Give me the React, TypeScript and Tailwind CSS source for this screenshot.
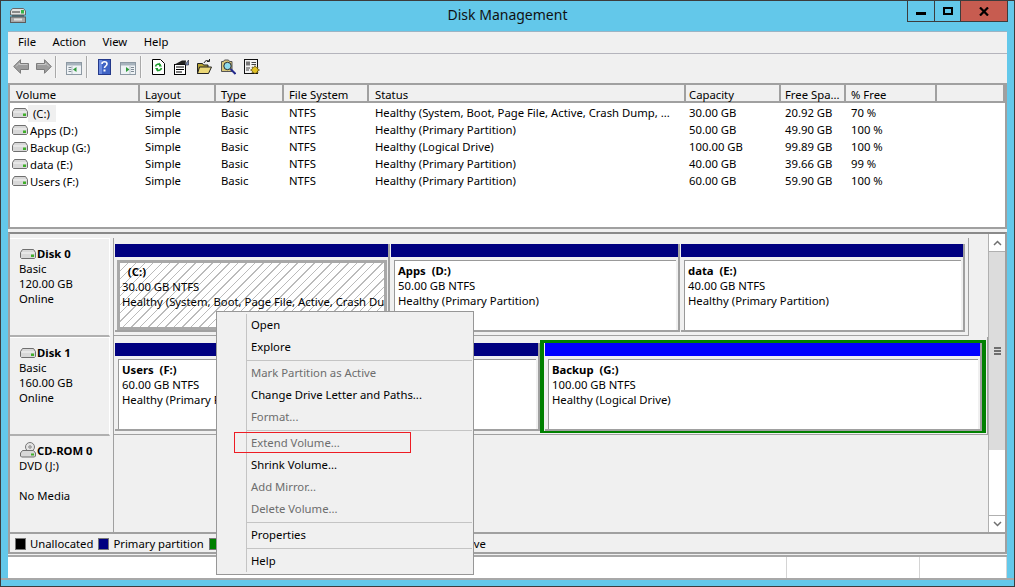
import React from "react";

const FONT = "font-['Noto_Sans','Open_Sans',sans-serif]";

const volumes = [
  { name: " (C:)", status: "Healthy (System, Boot, Page File, Active, Crash Dump, ...", cap: "30.00 GB", free: "20.92 GB", pct: "70 %" },
  { name: "Apps (D:)", status: "Healthy (Primary Partition)", cap: "50.00 GB", free: "49.90 GB", pct: "100 %" },
  { name: "Backup (G:)", status: "Healthy (Logical Drive)", cap: "100.00 GB", free: "99.89 GB", pct: "100 %" },
  { name: "data (E:)", status: "Healthy (Primary Partition)", cap: "40.00 GB", free: "39.66 GB", pct: "99 %" },
  { name: "Users (F:)", status: "Healthy (Primary Partition)", cap: "60.00 GB", free: "59.90 GB", pct: "100 %" },
];

const columns = [
  { label: "Volume", w: "w-[130px] pl-[6px]" },
  { label: "Layout", w: "w-[76px] pl-[5px]" },
  { label: "Type", w: "w-[68px] pl-[5px]" },
  { label: "File System", w: "w-[85px] pl-[5px]" },
  { label: "Status", w: "w-[317px] pl-[6px]" },
  { label: "Capacity", w: "w-[95px] pl-[3px]" },
  { label: "Free Spa...", w: "w-[65px] pl-[4px]" },
  { label: "% Free", w: "w-[91px] pl-[5px]" },
  { label: "", w: "w-[68px]" },
];

// small drive glyph used in list and disk labels
const Drive = () => (
  <svg width="16" height="10" viewBox="0 0 16 10" className="shrink-0">
    <path d="M2.500 .5h11l2 3v5l-1 1h-13l-1-1v-5z" fill="#d8d8d8" stroke="#6f6f6f" />
    <path d="M1.500 4h13" stroke="#f6f6f6" />
    <rect x="11" y="5.500" width="3" height="2.500" fill="#3fae2a" />
  </svg>
);

const CdDrive = () => (
  <svg width="16" height="16" viewBox="0 0 16 16" className="shrink-0">
    <circle cx="10" cy="5" r="4.500" fill="#e4e4e4" stroke="#777" />
    <circle cx="10" cy="5" r="1.200" fill="#fff" stroke="#777" />
    <path d="M2.500 8.500h11l2 2.500v3l-1 1H1.500l-1-1v-3z" fill="#d8d8d8" stroke="#6f6f6f" />
    <rect x="11" y="11.500" width="3" height="2" fill="#3fae2a" />
  </svg>
);

const TitleIcon = () => (
  <svg width="16" height="15" viewBox="0 0 16 15">
    <path d="M2.500 .5h11l2 2.500v4H.5V3z" fill="#e2e2e2" stroke="#666" />
    <rect x="11" y="2" width="3" height="3.500" fill="#37b44a" />
    <rect x="2" y="3" width="8" height="2" fill="#8a8a8a" />
    <rect x="2" y="7.500" width="12" height="1" fill="#333" />
    <rect x=".5" y="9" width="15" height="5.500" fill="#a8a8a8" stroke="#5c5c5c" />
    <rect x="4" y="10.500" width="8" height="2" fill="#e2e2e2" />
  </svg>
);

const Arrow = ({ flip }: { flip?: boolean }) => (
  <svg width="16" height="15" viewBox="0 0 16 15" className={`shrink-0 ${flip ? "-scale-x-100" : ""}`}>
    <path d="M.7 7.500 7.500.7v3.800h8v6h-8v3.800z" fill="#9c9c9c" stroke="#7c7c7c" />
    <path d="M3 7.500l3.500-3.500v1.500h8" fill="none" stroke="#c8c8c8" />
  </svg>
);

const PaneIcon = ({ right }: { right?: boolean }) => (
  <svg width="16" height="13" viewBox="0 0 16 13" className="mt-[3px] shrink-0">
    <rect x=".5" y=".5" width="15" height="12" fill="#eef2f5" stroke="#8d99a3" />
    <rect x="1" y="1" width="14" height="2.500" fill="#a7b3bd" />
    <path d="M2.500 5.500h3M2.500 7.500h3M2.500 9.500h3" stroke="#7d8a94" transform={right ? "translate(8.500 0)" : ""} />
    <path d={right ? "M6 5l3.500 2.500L6 10z" : "M10.500 5 7 7.500l3.500 2.500z"} fill="#2e9b3a" />
    <path d={right ? "M10 4v8" : "M6 4v8"} stroke="#b8c2ca" />
  </svg>
);

const HelpIcon = () => (
  <svg width="13" height="16" viewBox="0 0 13 16" className="shrink-0">
    <rect x=".5" y=".5" width="12" height="15" fill="#3f63c4" stroke="#24398a" />
    <rect x="1" y="1" width="3" height="14" fill="#6a8ae0" />
    <path d="M4 5c0-3 5-3 5 0 0 2-2.500 2-2.500 4" fill="none" stroke="#fff" strokeWidth="1.600" />
    <rect x="5.500" y="10.500" width="2" height="2" fill="#fff" />
  </svg>
);

const RefreshIcon = () => (
  <svg width="13" height="16" viewBox="0 0 13 16" className="shrink-0">
    <path d="M.5.5h8l4 4v11H.5z" fill="#fff" stroke="#000" />
    <path d="M3.500 7.500a3 3 0 0 1 5-1.500M9.500 9a3 3 0 0 1-5 1.500" fill="none" stroke="#1f9d2f" strokeWidth="1.600" />
    <path d="M7 3.500v4h3zM6 13v-4H3z" fill="#1f9d2f" />
  </svg>
);

const PropsIcon = () => (
  <svg width="15" height="16" viewBox="0 0 15 16" className="shrink-0">
    <rect x=".5" y="5.500" width="11" height="10" fill="#fff" stroke="#000" />
    <path d="M.5 5.500 8 1.500h4l-.5 4z" fill="#222" />
    <path d="M2 8h8M2 10.500h8M2 13h6" stroke="#000" strokeWidth="1.200" />
    <path d="M11 6l3.500-5v5z" fill="#7a8db5" stroke="#223" strokeWidth=".6" />
  </svg>
);

const FolderIcon = () => (
  <svg width="15" height="15" viewBox="0 0 15 15" className="shrink-0">
    <path d="M.5 4.500h5l1 1.500h4.500v8.500H.5z" fill="#b7a433" stroke="#222" />
    <path d="M2.500 8h12l-3 6.500H.5z" fill="#ecd877" stroke="#222" />
    <path d="M7 4c1-2.500 3-3 5-2M12.500 0v2.500H10" fill="none" stroke="#222" />
  </svg>
);

const SearchIcon = () => (
  <svg width="15" height="16" viewBox="0 0 15 16" className="shrink-0">
    <path d="M.5 2.500h2l1-1.500h4l1 1.500h2.500v10H.5z" fill="#d8c77a" stroke="#555" />
    <circle cx="6.500" cy="7" r="3.700" fill="#8edcec" stroke="#2a2a2a" />
    <path d="M9.500 10l5 5" stroke="#232a8c" strokeWidth="2" />
  </svg>
);

const WizardIcon = () => (
  <svg width="16" height="16" viewBox="0 0 16 16" className="shrink-0">
    <rect x=".5" y=".5" width="13" height="14" fill="#f3f3f3" stroke="#111" />
    <rect x="2" y="2.500" width="4" height="4" fill="#777" />
    <path d="M7.500 3.500h4.500M7.500 5.500h4.500M2 9h4M2 11h3" stroke="#444" />
    <path d="M11 6.500l1 2 2-.5-.5 2 2 1-2 1 .5 2-2-.5-1 1.500-1-1.500-2 .5.500-2-2-1 2-1-.5-2 2 .5z" fill="#e4c322" stroke="#4a3c00" strokeWidth=".6" />
  </svg>
);

const ToolSep = () => <div className="mx-[3px] h-[22px] w-0.5 shrink-0 border-l border-[#a9a9a9] bg-[#f8f8f8]" />;

const Partition = ({ title, size, status, width, hatch }: {
  title: string; size: string; status: string; width: string; hatch?: boolean;
}) => (
  <div className={`${width} flex h-[88px] shrink-0 flex-col pl-[1px]`}>
    <div className="flex h-full flex-col border-r-2 border-b-2 border-[#a0a0a0]">
      <div className="h-[13px] shrink-0 bg-[#000080]" />
      <div className={`mt-[3px] flex-1 overflow-hidden whitespace-nowrap leading-[15px] ${hatch
        ? "ml-[2px] mr-[1px] border-[3px] border-[#a8a8a8] bg-[repeating-linear-gradient(135deg,#fff,#fff_5px,#bbbbbb_5px,#bbbbbb_6px)] pl-[2px] pt-[1px]"
        : "ml-[3px] mr-[2px] border-l border-t border-[#999999] bg-white pl-[3px] pt-[2px]"}`}>
        <div className="whitespace-pre font-bold">{title}</div>
        <div>{size}</div>
        <div>{status}</div>
      </div>
    </div>
  </div>
);

const SelectedPartition = ({ title, size, status }: { title: string; size: string; status: string }) => (
  <div className="-mt-[3px] flex h-[93px] w-[446px] shrink-0 flex-col border-x-4 border-t-[3px] border-b-2 border-[#008000] pl-[1px]">
    <div className="flex h-full flex-col border-r-2 border-b-2 border-[#a0a0a0]">
      <div className="h-[13px] shrink-0 bg-[#0000ff]" />
      <div className="mt-[3px] ml-[3px] mr-[2px] flex-1 overflow-hidden whitespace-nowrap border-l border-t border-[#999999] bg-white pl-[3px] pt-[2px] leading-[15px]">
        <div className="whitespace-pre font-bold">{title}</div>
        <div>{size}</div>
        <div>{status}</div>
      </div>
    </div>
  </div>
);

const DiskLabel = ({ name, lines }: { name: string; lines: string[] }) => (
  <div className="flex h-full w-[104px] shrink-0 border-r border-[#a0a0a0]">
    <div className="h-full w-[100px] border-t border-r border-b-2 border-white border-b-[#b0b0b0] pl-[9px] pt-[7px] leading-[15px]">
      <div className="flex items-center font-bold">
        <span className="ml-[1px]"><Drive /></span>
        <span className="ml-[1px]">{name}</span>
      </div>
      {lines.map((l) => (
        <div key={l} className="h-[15px]">{l}</div>
      ))}
    </div>
  </div>
);

const MenuSep = () => <div className="mb-px mr-px mt-[2px] ml-[30px] h-px bg-[#c4c4c4]" />;

const MenuItem = ({ label, off, boxed }: { label: string; off?: boolean; boxed?: boolean }) => (
  <div className={`relative ml-[34px] h-[22px] leading-[22px] ${off ? "text-[#6d6d6d]" : "text-black"}`}>
    {boxed && <div className="absolute left-[-17px] top-0 h-[21px] w-[177px] border border-[#ed1c24]" />}
    {label}
  </div>
);

const LegendItem = ({ color, label }: { color: string; label: string }) => (
  <div className="flex items-center">
    <span className={`mr-[4px] h-[12px] w-[11px] border border-[#777777] ${color}`} />
    <span>{label}</span>
  </div>
);

export default function App() {
  return (
    <div className={`${FONT} relative flex h-[587px] w-[1015px] flex-col overflow-hidden border border-[#3c3c3c] bg-[#63c8ea] text-[11.3px] text-black`}>
      {/* title bar */}
      <div className="relative flex h-[30px] shrink-0 items-start justify-center">
        <div className="absolute left-[9px] top-[7px]"><TitleIcon /></div>
        <div className="pt-[4px] text-[14px] leading-[20px] text-[#111111]">Disk Management</div>
        <div className="absolute right-[6px] top-0 flex h-[21px] border-x border-b border-[#3c3c3c]">
          <div className="flex w-[27px] items-end justify-center border-r border-[#3c3c3c] pb-[6px]"><div className="h-[3px] w-[10px] bg-black" /></div>
          <div className="flex w-[26px] items-center justify-center border-r border-[#3c3c3c]"><div className="h-[8px] w-[10px] border-2 border-black" /></div>
          <div className="flex w-[46px] items-center justify-center bg-[#c75c50]">
            <svg width="10" height="9" viewBox="0 0 10 9"><path d="M1 .5l8 8M9 .5l-8 8" stroke="#000" strokeWidth="2.200" /></svg>
          </div>
        </div>
      </div>

      {/* client area */}
      <div className="mx-[7px] flex min-h-0 flex-1 flex-col border-t border-[#9cb4c4] bg-[#f0f0f0]">
        {/* menu */}
        <div className="flex h-[22px] shrink-0 items-center gap-[16.5px] border-b border-[#b4b4bc] pl-[10px]">
          <span>File</span>
          <span>Action</span>
          <span>View</span>
          <span>Help</span>
        </div>
        {/* toolbar */}
        <div className="flex h-[29px] shrink-0 items-center pb-[4px] pl-[5px]">
          <Arrow />
          <div className="w-[7px]" />
          <Arrow flip />
          <ToolSep />
          <div className="w-[6px]" />
          <PaneIcon />
          <div className="w-px" />
          <ToolSep />
          <div className="w-[7px]" />
          <HelpIcon />
          <div className="w-[9px]" />
          <PaneIcon right />
          <div className="w-px" />
          <ToolSep />
          <div className="w-[7px]" />
          <RefreshIcon />
          <div className="w-[9px]" />
          <PropsIcon />
          <div className="w-[8px]" />
          <FolderIcon />
          <div className="w-[9px]" />
          <SearchIcon />
          <div className="w-[8px]" />
          <WizardIcon />
        </div>

        {/* volume list */}
        <div className="h-[146px] shrink-0 border-2 border-[#a0a0a0] bg-white">
          <div className="flex h-[18px] bg-[#f0f0f0]">
            {columns.map((c) => (
              <div key={c.label || "end"} className={`${c.w} h-full shrink-0 border-r-2 border-b-2 border-[#a0a0a0] leading-[19px]`}>
                {c.label}
              </div>
            ))}
          </div>
          <div className="pt-[1.5px]">
            {volumes.map((v, i) => (
              <div key={v.name} className="flex h-[17px] items-center whitespace-nowrap">
                <div className="flex w-[130px] shrink-0 items-center pl-[2px]">
                  <Drive />
                  <span className={`h-[17px] whitespace-pre pl-[2px] leading-[17px] ${i === 0 ? "bg-[#f0f0f0] pr-[6px]" : ""}`}>{v.name}</span>
                </div>
                <div className="w-[76px] shrink-0 pl-[5px]">Simple</div>
                <div className="w-[68px] shrink-0 pl-[5px]">Basic</div>
                <div className="w-[85px] shrink-0 pl-[5px]">NTFS</div>
                <div className="w-[317px] shrink-0 pl-[6px]">{v.status}</div>
                <div className="w-[95px] shrink-0 pl-[3px]">{v.cap}</div>
                <div className="w-[65px] shrink-0 pl-[4px]">{v.free}</div>
                <div className="pl-[5px]">{v.pct}</div>
              </div>
            ))}
          </div>
        </div>

        {/* graphical view */}
        <div className="mt-[3px] flex h-[300px] shrink-0 border-x-2 border-t-2 border-[#a0a0a0] border-t-[#8a8a8a]">
          <div className="flex min-w-0 flex-1 flex-col pt-[4px]">
            <div className="flex h-[99px] shrink-0">
              <DiskLabel name="Disk 0" lines={["Basic", "120.00 GB", "Online"]} />
              <div className="mb-px flex items-start border-r border-b border-[#a0a0a0] pr-[3px] pt-[6px]">
                <Partition title="  (C:)" size="30.00 GB NTFS" status="Healthy (System, Boot, Page File, Active, Crash Dump, ..." width="w-[276px]" hatch />
                <Partition title="Apps  (D:)" size="50.00 GB NTFS" status="Healthy (Primary Partition)" width="w-[290px]" />
                <Partition title="data  (E:)" size="40.00 GB NTFS" status="Healthy (Primary Partition)" width="w-[285px]" />
              </div>
            </div>
            <div className="flex h-[99px] shrink-0">
              <DiskLabel name="Disk 1" lines={["Basic", "160.00 GB", "Online"]} />
              <div className="mb-px flex items-start border-r border-b border-[#a0a0a0] pr-[1px] pt-[6px]">
                <Partition title="Users  (F:)" size="60.00 GB NTFS" status="Healthy (Primary Partition)" width="w-[426px]" />
                <SelectedPartition title="Backup  (G:)" size="100.00 GB NTFS" status="Healthy (Logical Drive)" />
              </div>
            </div>
            <div className="flex min-h-0 flex-1">
              <div className="w-[104px] shrink-0 border-r border-[#a0a0a0] pl-[9px] pt-[6px] leading-[15px]">
                <div className="flex items-center font-bold"><span className="ml-[1px]"><CdDrive /></span><span className="ml-[1px]">CD-ROM 0</span></div>
                <div>DVD (J:)</div>
                <div className="mt-[15px]">No Media</div>
              </div>
            </div>
          </div>
          {/* scrollbar */}
          <div className="flex w-[17px] shrink-0 flex-col border-l border-[#b0b0b0] bg-[#dcdcdc]">
            <div className="flex h-[17px] items-center justify-center bg-white">
              <svg width="9" height="6" viewBox="0 0 9 6"><path d="M1 5l3.500-3.500L8 5" fill="none" stroke="#707070" strokeWidth="1.500" /></svg>
            </div>
            <div className="flex flex-1 flex-col border-y border-[#b0b0b0]">
              <div className="flex h-[198px] flex-col items-center justify-center gap-px bg-[#dcdcdc]">
                <div className="h-[2px] w-[7px] bg-[#6e6e6e]" />
                <div className="h-[2px] w-[7px] bg-[#6e6e6e]" />
                <div className="h-[2px] w-[7px] bg-[#6e6e6e]" />
              </div>
              <div className="flex-1 bg-white" />
            </div>
            <div className="flex h-[16px] items-center justify-center bg-white">
              <svg width="9" height="6" viewBox="0 0 9 6"><path d="M1 1l3.500 3.500L8 1" fill="none" stroke="#707070" strokeWidth="1.500" /></svg>
            </div>
          </div>
        </div>

        {/* legend */}
        <div className="flex h-[22px] shrink-0 items-center gap-[5px] border-2 border-[#a0a0a0] pl-[5px] pt-[2px]">
          <LegendItem color="bg-black" label="Unallocated" />
          <LegendItem color="bg-[#000080]" label="Primary partition" />
          <LegendItem color="bg-[#008000]" label="Extended partition" />
          <LegendItem color="bg-[#00ff00]" label="Free space" />
          <LegendItem color="bg-[#0000ff]" label="Logical drive" />
        </div>

        {/* status bar */}
        <div className="mt-[1px] flex h-[23px] shrink-0 border-t-2 border-[#a8a8a8] bg-white">
          <div className="w-[779px] border-r border-[#d4d4d4]" />
          <div className="w-[133px] border-r border-[#d4d4d4]" />
          <div className="flex-1 border-r border-[#d4d4d4]" />
        </div>
      </div>
      <div className="h-[8px] shrink-0 border-t-2 border-[#a8a8a8]" />

      {/* context menu */}
      <div className="absolute left-[215px] top-[310px] w-[258px] border border-[#979797] bg-[#f0f0f0] py-[2px]">
        <div className="absolute bottom-[2px] left-[29px] top-[2px] w-px bg-[#c4c4c4]" />
        <MenuItem label="Open" />
        <MenuItem label="Explore" />
        <MenuSep />
        <MenuItem label="Mark Partition as Active" off />
        <MenuItem label="Change Drive Letter and Paths..." />
        <MenuItem label="Format..." off />
        <MenuSep />
        <MenuItem label="Extend Volume..." off boxed />
        <MenuItem label="Shrink Volume..." />
        <MenuItem label="Add Mirror..." off />
        <MenuItem label="Delete Volume..." off />
        <MenuSep />
        <MenuItem label="Properties" />
        <MenuSep />
        <MenuItem label="Help" />
      </div>
    </div>
  );
}
